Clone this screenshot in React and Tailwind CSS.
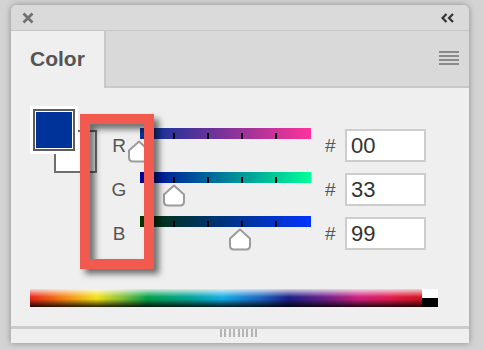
import React from "react";

const rows = [
  { l: "R", v: "00", grad: "bg-[linear-gradient(to_right,#003399,#ff3399)]", pos: -1 },
  { l: "G", v: "33", grad: "bg-[linear-gradient(to_right,#000099,#00ff99)]", pos: 34 },
  { l: "B", v: "99", grad: "bg-[linear-gradient(to_right,#003300,#0033ff)]", pos: 100 },
];

function Thumb({ pos }) {
  return (
    <svg
      width="24"
      height="23"
      viewBox="0 0 24 23"
      className="absolute top-[12px]"
      style={{ left: pos - 12 }}
    >
      <path
        d="M12 1.5 L22 10.5 V17.5 Q22 21.5 18 21.5 H6 Q2 21.5 2 17.5 V10.5 Z"
        fill="#ffffff"
        stroke="#9c9c9c"
        strokeWidth="2"
        strokeLinejoin="round"
      />
    </svg>
  );
}

export default function App() {
  return (
    <div className="w-[484px] h-[350px] bg-[#d3d3d3] pt-[5px] pl-[11px] font-['Liberation_Sans',Arial,sans-serif] overflow-hidden">
      <div className="w-[458px] h-[338px] rounded-t-[6px] bg-[#efefef] shadow-[0_0_6px_rgba(0,0,0,0.35)] flex flex-col overflow-hidden">
        {/* title bar */}
        <div className="h-[26px] shrink-0 bg-[#dadada] border-b border-[#c6c6c6] flex items-center justify-between pl-[11px] pr-[14px]">
          <svg width="12" height="12" viewBox="0 0 12 12">
            <path d="M1.5 1.5 L10.5 10.5 M10.5 1.5 L1.5 10.5" stroke="#727272" strokeWidth="2.8" strokeLinecap="butt" />
          </svg>
          <svg width="14" height="10" viewBox="0 0 14 10">
            <path d="M5.5 1 L1.5 5 L5.5 9 M12 1 L8 5 L12 9" stroke="#333333" strokeWidth="2.2" fill="none" />
          </svg>
        </div>
        {/* tab row */}
        <div className="h-[57px] shrink-0 flex bg-[#d9d9d9]">
          <div className="w-[93px] bg-[#efefef] flex items-center pl-[19px] pb-[2px]">
            <span className="text-[21px] font-bold text-[#555555] leading-none">Color</span>
          </div>
          <div className="flex-1 border-l-2 border-b-2 border-[#c8c8c8] flex items-center justify-end pr-[10px] pb-[2px]">
            <div className="flex flex-col gap-[2px] w-[20px]">
              <div className="h-[2px] bg-[#8a8a8a]" />
              <div className="h-[2px] bg-[#8a8a8a]" />
              <div className="h-[2px] bg-[#8a8a8a]" />
              <div className="h-[2px] bg-[#8a8a8a]" />
            </div>
          </div>
        </div>
        {/* content */}
        <div className="relative flex-1 flex flex-col">
          <div className="flex items-start pt-[18px]">
            {/* swatches */}
            <div className="relative ml-[19px] w-[67px] h-[67px] shrink-0">
              <div className="absolute left-[24px] top-[24px] w-[43px] h-[43px] bg-white border-2 border-[#6e6e6e]" />
              <div className="absolute left-0 top-0 w-[48px] h-[48px] bg-white p-[3px]">
                <div className="w-full h-full border-2 border-[#5c5c5c] p-[1px]">
                  <div className="w-full h-full bg-[#003399]" />
                </div>
              </div>
            </div>
            {/* sliders */}
            <div className="mt-[22px] flex flex-col gap-[9px]">
              {rows.map((r) => (
                <div key={r.l} className="flex items-center h-[35px]">
                  <div className="ml-[9px] w-[26px] text-center text-[19px] leading-none text-[#555555]">{r.l}</div>
                  <div className={`relative self-start ml-[8px] w-[171px] h-[11px] ${r.grad}`}>
                    <div className="absolute bottom-0 left-[33px] w-[2px] h-[6px] bg-black" />
                    <div className="absolute bottom-0 left-[67px] w-[2px] h-[6px] bg-black" />
                    <div className="absolute bottom-0 left-[101px] w-[2px] h-[6px] bg-black" />
                    <div className="absolute bottom-0 left-[135px] w-[2px] h-[6px] bg-black" />
                    <Thumb pos={r.pos} />
                  </div>
                  <div className="ml-[14px] w-[20px] text-[19px] leading-none text-[#555555]">#</div>
                  <div className="w-[81px] h-[33px] bg-white border-2 border-[#cdcdcd] flex items-center pl-[4px] text-[22px] leading-none text-[#333333]">
                    {r.v}
                  </div>
                </div>
              ))}
            </div>
          </div>
          {/* spectrum */}
          <div className="mt-[38px] ml-[19px] flex h-[18px]">
            <div className="relative w-[392px] h-full bg-[linear-gradient(to_right,#e8231a_0%,#f57e14_8%,#f3e21a_17%,#7cbf3a_24%,#00a04a_30%,#00a59a_41%,#14aee6_49%,#1c62c0_59%,#1b1f86_66%,#6a1f8a_75%,#d1207e_84%,#e01c4a_92%,#d2141e_100%)]">
              <div className="absolute inset-0 bg-[linear-gradient(to_bottom,rgba(255,255,255,0.8)_0%,rgba(255,255,255,0)_45%,rgba(0,0,0,0)_55%,rgba(0,0,0,0.85)_100%)]" />
            </div>
            <div className="w-[16px] h-full flex flex-col">
              <div className="h-[9px] bg-white" />
              <div className="flex-1 bg-black" />
            </div>
          </div>
          {/* red highlight */}
          <div className="absolute left-[69px] top-[26px] w-[74px] h-[155px] border-[10px] border-[#f35a4f] [filter:drop-shadow(5px_5px_3px_rgba(0,0,0,0.55))]" />
        </div>
        {/* bottom strip */}
        <div className="h-[3px] shrink-0 bg-[#cbcbcb]" />
        <div className="h-[14px] shrink-0 bg-[#efefef] flex justify-center items-start pr-[3px]">
          <div className="flex gap-[2.4px] h-[8px]">
            {[0, 1, 2, 3, 4, 5, 6, 7, 8].map((i) => (
              <div key={i} className="w-[2px] h-full bg-[#b4b4b4]" />
            ))}
          </div>
        </div>
      </div>
    </div>
  );
}
